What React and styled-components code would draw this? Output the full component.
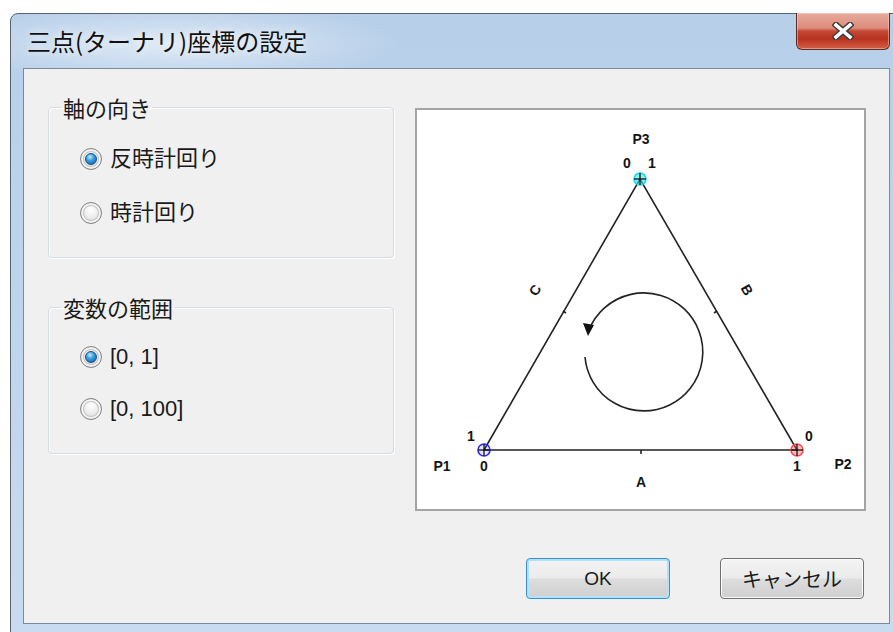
import React from 'react';
import styled, { createGlobalStyle } from 'styled-components';

const GlobalStyle = createGlobalStyle`
  html, body {
    margin: 0;
    padding: 0;
  }
  body {
    background: #ffffff;
    width: 893px;
    height: 632px;
    overflow: hidden;
    font-family: "Liberation Sans", "Noto Sans CJK JP", sans-serif;
    color: #1a1a1a;
  }
`;

const Window = styled.div`
  margin: 13px 0 0 10px;
  width: 892px;
  height: 630px;
  box-sizing: border-box;
  border: 1px solid #59636e;
  border-radius: 8px 8px 0 0;
  background:
    radial-gradient(ellipse 230px 40px at 160px 30px, rgba(255, 255, 255, 0.55), rgba(255, 255, 255, 0) 100%),
    linear-gradient(180deg, #b7cfe9 0%, #bfd5ec 50%, #c8dbf0 100%);
  display: flex;
  flex-direction: column;
`;

const TitleBar = styled.div`
  height: 54px;
  display: flex;
  align-items: flex-start;
  padding-left: 16px;
`;

const Title = styled.div`
  font-family: "Noto Sans CJK JP", sans-serif;
  font-size: 24px;
  line-height: 54px;
  color: #111;
  text-shadow: 0 0 8px rgba(255, 255, 255, 0.9);
`;

const CloseButton = styled.div`
  margin: -1px 11px 0 auto;
  width: 94px;
  height: 37px;
  box-sizing: border-box;
  border: 1px solid #5b2c24;
  border-top: none;
  border-radius: 0 0 6px 6px;
  background: linear-gradient(180deg, #e8aa9c 0%, #dc8c7c 42%, #c44a35 50%, #b8321f 72%, #d45e46 100%);
  box-shadow: inset 0 0 0 1px rgba(255, 220, 210, 0.45);
  display: flex;
  align-items: center;
  justify-content: center;
`;

const Client = styled.div`
  margin-left: 12px;
  width: 867px;
  height: 556px;
  box-sizing: border-box;
  border: 1px solid #7d8996;
  background: #f0f0f0;
  padding: 27px 22px 0 24px;
  display: flex;
  flex-direction: column;
`;

const Content = styled.div`
  display: flex;
  gap: 21px;
`;

const LeftColumn = styled.div`
  width: 346px;
  display: flex;
  flex-direction: column;
  gap: 38px;
`;

const Group = styled.fieldset`
  margin: 0;
  min-width: 0;
  box-sizing: border-box;
  width: 346px;
  border: 1px solid #d3dce3;
  border-radius: 4px;
  box-shadow: inset 1px 1px 0 #ffffff, 1px 1px 0 #ffffff;
  padding: 0 12px;
`;

const Legend = styled.legend`
  font-family: "Noto Sans CJK JP", sans-serif;
  font-size: 22px;
  line-height: 22px;
  padding: 0 2px;
  color: #1a1a1a;
`;

const RadioList = styled.div`
  display: flex;
  flex-direction: column;
  padding: ${(p) => p.$top}px 0 29px 19px;
  gap: ${(p) => p.$gap}px;
`;

const RadioRow = styled.label`
  height: 30px;
  display: flex;
  align-items: center;
  gap: 8px;
`;

const RadioCircle = styled.span`
  width: 22px;
  height: 22px;
  box-sizing: border-box;
  border-radius: 50%;
  border: 1px solid #858585;
  background: radial-gradient(circle at 50% 35%, #ffffff 0%, #ececec 45%, #c8c8c8 100%);
  box-shadow: inset 0 0 0 2px #f4f4f4, inset 0 0 0 3px #c4c4c4;
  display: flex;
  align-items: center;
  justify-content: center;

  &::after {
    content: '';
    display: ${(p) => (p.$checked ? 'block' : 'none')};
    width: 12px;
    height: 12px;
    border-radius: 50%;
    box-sizing: border-box;
    border: 1px solid #174f86;
    background: radial-gradient(circle at 40% 30%, #c4ecfd 0%, #3a9ee0 40%, #0d5a9e 100%);
  }
`;

const RadioText = styled.span`
  font-size: 22px;
  line-height: 30px;
  color: #1a1a1a;
`;

const PlotBox = styled.div`
  margin-top: 12px;
  width: 451px;
  height: 403px;
  box-sizing: border-box;
  border: 2px solid #a4a4a4;
  background: #ffffff;
  svg {
    display: block;
  }
`;

const ButtonRow = styled.div`
  margin-top: 47px;
  display: flex;
  justify-content: flex-end;
  gap: 50px;
  padding-right: 3px;
`;

const Button = styled.div`
  width: 144px;
  height: 41px;
  box-sizing: border-box;
  border: 1px solid ${(p) => (p.$default ? '#3c8fd0' : '#707070')};
  border-radius: 4px;
  background: linear-gradient(180deg, #f3f3f3 0%, #ebebeb 48%, #dddddd 52%, #cfcfcf 100%);
  box-shadow: inset 0 0 0 ${(p) => (p.$default ? '2px #aee3fb' : '1px #fbfbfb')};
  display: flex;
  align-items: center;
  justify-content: center;
  font-size: ${(p) => (p.$default ? '19px' : '20px')};
  color: #1a1a1a;
`;

const groups = [
  { title: '軸の向き', top: 26, gap: 24, items: ['反時計回り', '時計回り'] },
  { title: '変数の範囲', top: 24, gap: 22, items: ['[0, 1]', '[0, 100]'] },
];

const Label = ({ x, y, children, rotate }) => (
  <text
    x={x}
    y={y + 5}
    textAnchor="middle"
    fontFamily="Liberation Sans, sans-serif"
    fontWeight="bold"
    fontSize="14"
    fill="#151515"
    transform={rotate ? `rotate(${rotate} ${x} ${y})` : undefined}
  >
    {children}
  </text>
);

const Marker = ({ x, y, color, fill }) => (
  <g>
    <circle cx={x} cy={y} r="6" fill={fill} stroke={color} strokeWidth="1.6" />
    <line x1={x - 6} y1={y} x2={x + 6} y2={y} stroke="#111" strokeWidth="1.3" />
    <line x1={x} y1={y - 6} x2={x} y2={y + 6} stroke="#111" strokeWidth="1.3" />
  </g>
);

const TernaryPlot = () => (
  <svg width="447" height="399" viewBox="417 110 447 399">
    <g stroke="#222" strokeWidth="1.6" fill="none">
      <polygon points="484,450 797,450 640,179" />
      <line x1="641" y1="450" x2="641" y2="454" />
      <line x1="563" y1="311" x2="566" y2="313" />
      <line x1="717" y1="311" x2="714" y2="313" />
      <path d="M 585 357 A 59 59 0 1 0 589 330" />
    </g>
    <polygon points="583,323 594,325 588,336" fill="#111" />
    <Marker x={640} y={179} color="#18d8e4" fill="rgba(40,230,240,0.55)" />
    <Marker x={484} y={450} color="#2a2aff" fill="rgba(90,90,255,0.15)" />
    <Marker x={797} y={450} color="#ff4a4a" fill="rgba(255,90,90,0.4)" />
    <Label x={641} y={139}>P3</Label>
    <Label x={627} y={163}>0</Label>
    <Label x={652} y={163}>1</Label>
    <Label x={535} y={290} rotate={-60}>C</Label>
    <Label x={747} y={290} rotate={60}>B</Label>
    <Label x={471} y={436}>1</Label>
    <Label x={442} y={466}>P1</Label>
    <Label x={484} y={466}>0</Label>
    <Label x={641} y={482}>A</Label>
    <Label x={809} y={436}>0</Label>
    <Label x={797} y={466}>1</Label>
    <Label x={843} y={464}>P2</Label>
  </svg>
);

export default function App() {
  return (
    <>
      <GlobalStyle />
      <Window>
        <TitleBar>
          <Title>三点(ターナリ)座標の設定</Title>
          <CloseButton>
            <svg width="22" height="18" viewBox="0 0 22 18">
              <g strokeLinecap="square">
                <path d="M4 3 L18 15 M18 3 L4 15" stroke="#3d3d3d" strokeWidth="6.5" />
                <path d="M4 3 L18 15 M18 3 L4 15" stroke="#ffffff" strokeWidth="3.6" />
              </g>
            </svg>
          </CloseButton>
        </TitleBar>
        <Client>
          <Content>
            <LeftColumn>
              {groups.map((g) => (
                <Group key={g.title}>
                  <Legend>{g.title}</Legend>
                  <RadioList $top={g.top} $gap={g.gap}>
                    {g.items.map((item, i) => (
                      <RadioRow key={item}>
                        <RadioCircle $checked={i === 0} />
                        <RadioText>{item}</RadioText>
                      </RadioRow>
                    ))}
                  </RadioList>
                </Group>
              ))}
            </LeftColumn>
            <PlotBox>
              <TernaryPlot />
            </PlotBox>
          </Content>
          <ButtonRow>
            <Button $default>OK</Button>
            <Button>キャンセル</Button>
          </ButtonRow>
        </Client>
      </Window>
    </>
  );
}
